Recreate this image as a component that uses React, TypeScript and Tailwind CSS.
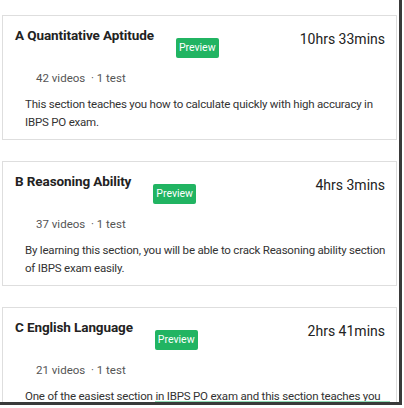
const sections = [
  {
    title: "A Quantitative Aptitude",
    duration: "10hrs 33mins",
    videos: 42,
    description:
      "This section teaches you how to calculate quickly with high accuracy in IBPS PO exam.",
  },
  {
    title: "B Reasoning Ability",
    duration: "4hrs 3mins",
    videos: 37,
    description:
      "By learning this section, you will be able to crack Reasoning ability section of IBPS exam easily.",
  },
  {
    title: "C English Language",
    duration: "2hrs 41mins",
    videos: 21,
    description:
      "One of the easiest section in IBPS PO exam and this section teaches you how to improve your english language skills.",
  },
];

export default function App() {
  return (
    <div className="h-[408px] w-[404px] overflow-hidden bg-white font-['Roboto',sans-serif]">
      <div className="relative h-[405px] w-[402px] overflow-hidden border-r-[3px] border-b-[3px] border-[#3a3a3a] pl-[2px] pt-[15px]">
        <div className="flex w-[395px] flex-col gap-[21px]">
          {sections.map((section) => (
            <div
              key={section.title}
              className="border border-[#dedede] bg-white pl-[12px] pr-[11px] pt-[9px] pb-[8px]"
            >
              <div className="flex items-start">
                <h3 className="text-[13.5px] font-bold leading-[20px] tracking-[-0.1px] text-[#222]">
                  {section.title}
                </h3>
                <span className="ml-[22px] mt-[13px] rounded-[2px] bg-[#21b462] px-[3px] text-[10.5px] leading-[20px] text-white">
                  Preview
                </span>
                <span className="ml-auto mt-[4px] text-[14px] leading-[20px] text-[#222]">
                  {section.duration}
                </span>
              </div>
              <p className="mt-[11px] pl-[21px] text-[11.5px] leading-[18px] text-[#555]">
                {section.videos} videos &nbsp;· 1 test
              </p>
              <p className="mr-[-6px] mt-[8px] pl-[10px] text-[11.5px] leading-[18px] tracking-[-0.2px] text-[#333]">
                {section.description}
              </p>
            </div>
          ))}
        </div>
        <div className="absolute bottom-0 left-[155px] h-px w-[235px] bg-[#8fdcb4]" />
      </div>
    </div>
  );
}
